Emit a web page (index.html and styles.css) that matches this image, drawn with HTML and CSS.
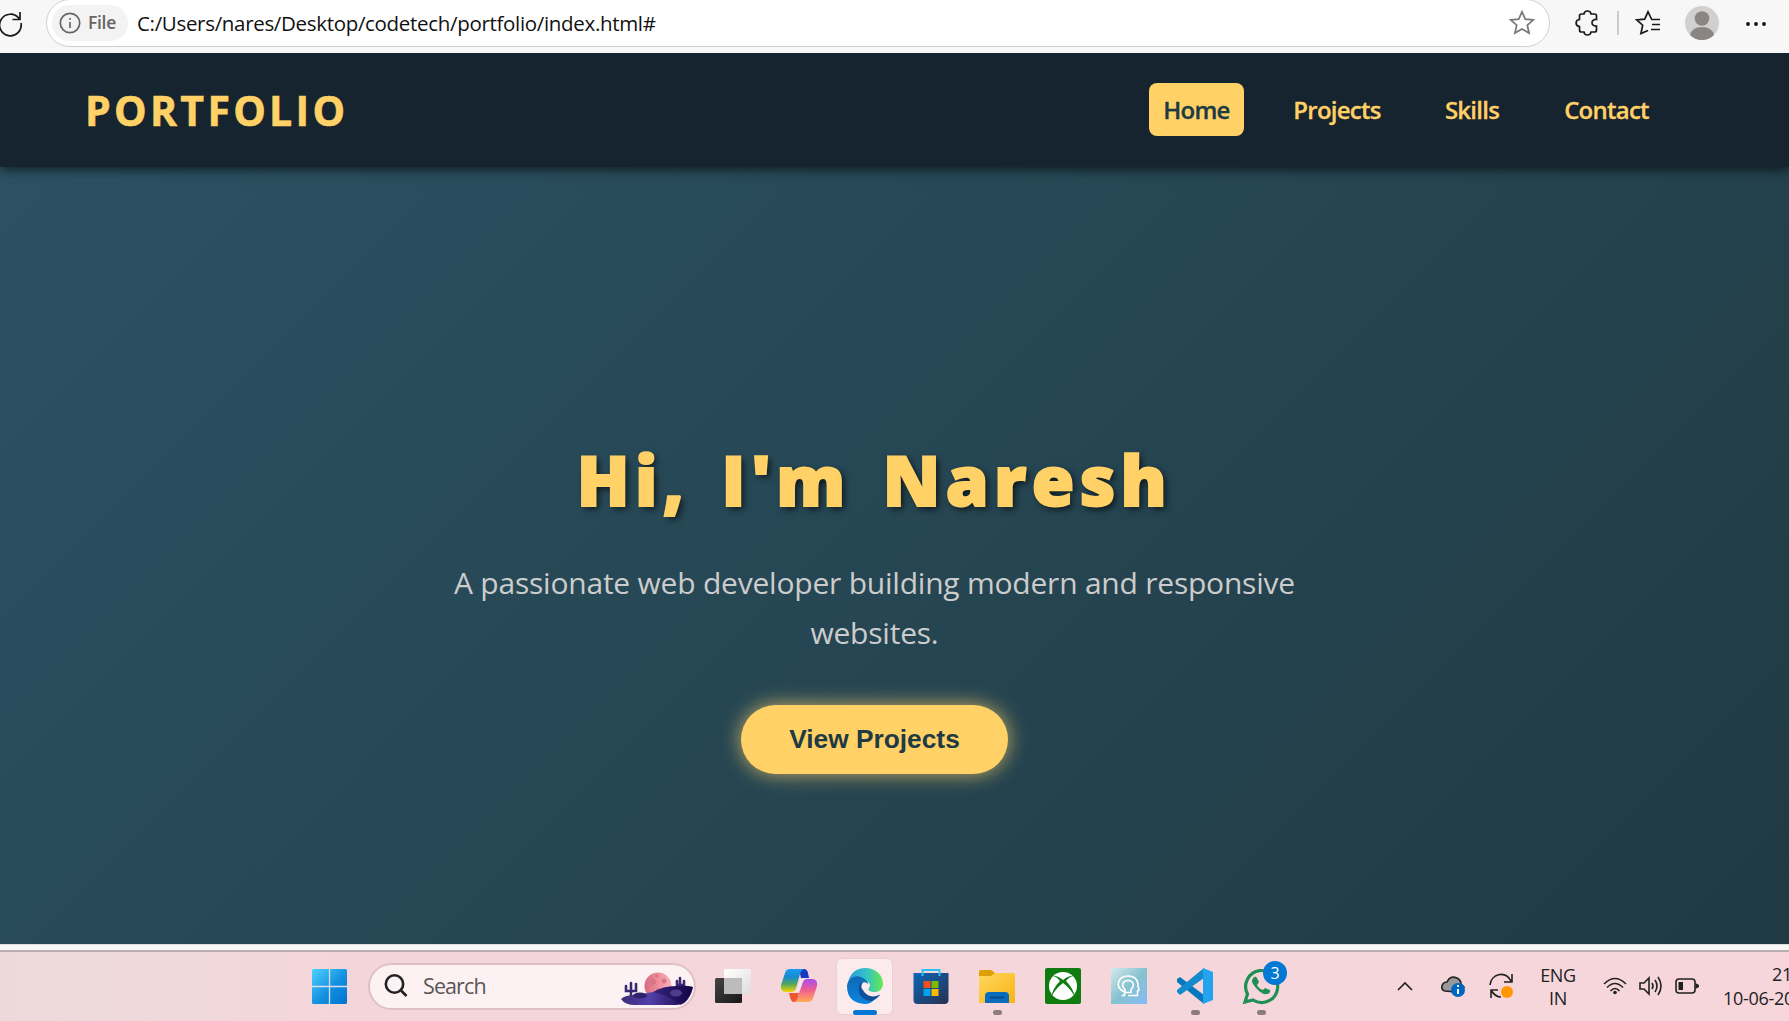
FILE: index.html
```html
<!DOCTYPE html>
<html lang="en">
<head>
<meta charset="utf-8">
<title>Portfolio</title>
<link rel="stylesheet" href="styles.css">
</head>
<body>
<div class="toolbar">
  <svg class="reload" viewBox="0 0 24 24"><path d="M21 7.500A10.800 10.800 0 1 0 23 12M22 1v7.500h-7.500"/></svg>
  <div class="address">
    <span class="file-chip"><svg class="info" viewBox="0 0 22 22"><circle cx="11" cy="11" r="9.700"/><path d="M11 10v6M11 6v1.800"/></svg><span>File</span></span>
    <span class="url">C:/Users/nares/Desktop/codetech/portfolio/index.html#</span>
    <svg class="star" viewBox="0 0 26 26"><path d="M13 1.800l3.300 7.300 8 .8-6 5.300 1.800 7.900L13 19l-7.100 4.100 1.800-7.900-6-5.300 8-.8z"/></svg>
  </div>
  <svg class="puzzle" viewBox="0 0 24 26"><path d="M6.500 4H9c.5-4 6.500-4 7 0h3.500q2 0 2 2v3.500c-6-.5-6 7 0 6.500V20q0 2-2 2H16c-.5 4-6.500 4-7 0H6.500q-2 0-2-2v-3.500c-4.500-.5-4.500-6.500 0-7V6q0-2 2-2z"/></svg>
  <i class="rule"></i>
  <svg class="favs" viewBox="0 0 26 26"><path d="M16.500 9L13 1.800 9.700 9.100l-8 .8 6 5.300-1.800 8.400L13 20.500M16 9.500h9M17 14.500h8M16 19.500h9"/></svg>
  <svg class="avatar" viewBox="0 0 34 34"><circle cx="17" cy="17" r="17" fill="#d2d0ce"/><circle cx="17" cy="12.500" r="7.300" fill="#8a8583"/><path d="M5 29q2-8 12-8t12 8Q24 34 17 34T5 29z" fill="#8a8583"/></svg>
  <svg class="more" viewBox="0 0 20 4"><circle cx="2" cy="2" r="1.900"/><circle cx="10" cy="2" r="1.900"/><circle cx="18" cy="2" r="1.900"/></svg>
</div>
<div class="page">
  <header class="site-header">
    <div class="logo">PORTFOLIO</div>
    <nav><a class="home active">Home</a><a class="projects">Projects</a><a class="skills">Skills</a><a class="contact">Contact</a></nav>
  </header>
  <main class="hero">
    <h1>Hi, I'm Naresh</h1>
    <p>A passionate web developer building modern and responsive<br>websites.</p>
    <button>View Projects</button>
  </main>
</div>
<div class="window-edge"></div>
<footer class="taskbar">
  <svg class="start" viewBox="0 0 35 35"><defs><linearGradient id="win" x2="1" y2="1"><stop stop-color="#4dd2ff"/><stop offset=".55" stop-color="#1490e0"/><stop offset="1" stop-color="#0072d0"/></linearGradient></defs><rect width="35" height="35" rx="1.500" fill="url(#win)"/><path d="M17.500 0v35M0 17.500h35" stroke="#d5dff0" stroke-width="1.300"/></svg>
  <div class="search">
    <svg class="lens" viewBox="0 0 24 24"><circle cx="10.500" cy="10" r="8.700"/><path d="M17 16.500l5.500 5.500"/></svg>
    <span>Search</span>
    <svg class="desert" viewBox="0 0 72 34"><defs><linearGradient id="dune"><stop stop-color="#3d2c78"/><stop offset=".4" stop-color="#5140a8"/><stop offset="1" stop-color="#12003f"/></linearGradient><linearGradient id="moon"><stop stop-color="#d4697f"/><stop offset=".5" stop-color="#f08d9c"/><stop offset="1" stop-color="#f6b2ba"/></linearGradient></defs><circle cx="37" cy="14" r="13.500" fill="url(#moon)"/><g fill="#d77586"><circle cx="32" cy="10" r="3"/><circle cx="43" cy="9" r="2.400"/><circle cx="37" cy="18" r="2"/><circle cx="36" cy="4" r="1.400"/></g><path d="M10 26V11M5 14v5h5M15 12v7h-5M59 17V6M56 9v4h3M63 9v4h-4" fill="none" stroke="#37286f" stroke-width="2.600" stroke-linecap="round"/><path d="M0 27q4-4 14-4 8-1 18-3 10-6 24-6 9-1 16 1-2 10-9 16-3 2-8 2H14Q4 33 0 27z" fill="url(#dune)"/><path d="M32 20q14 2 28 13 9-4 12-18-7-2-16-1-14 0-24 6z" fill="#1a0850" opacity=".45"/><ellipse cx="19" cy="23.500" rx="7" ry="3" fill="#30226b"/><ellipse cx="55" cy="21" rx="6" ry="3.500" fill="#4b3e8c"/></svg>
  </div>
  <svg class="app taskview" viewBox="0 0 36 36"><defs><linearGradient id="tv" x2="1" y2="1"><stop stop-color="#444"/><stop offset="1" stop-color="#181818"/></linearGradient><linearGradient id="tw" x2="1" y2="1"><stop stop-color="#fff"/><stop offset="1" stop-color="#ddd"/></linearGradient></defs><rect y="10" width="27" height="25" rx="1.500" fill="url(#tv)"/><rect x="9" y="1" width="27" height="25" rx="1.500" fill="url(#tw)"/><path d="M9 10h18v16H9z" fill="#bcbcbc"/></svg>
  <svg class="app copilot" viewBox="0 0 36 36"><defs><linearGradient id="cpa" x2="0" y2="1"><stop stop-color="#1c9af0"/><stop offset=".35" stop-color="#168bd0"/><stop offset=".65" stop-color="#51a660"/><stop offset="1" stop-color="#f5d400"/></linearGradient><linearGradient id="cpb" x2="0" y2="1"><stop stop-color="#a94df0"/><stop offset=".5" stop-color="#f2608c"/><stop offset="1" stop-color="#ffad54"/></linearGradient></defs><path d="M18 1h5q3 0 4 4l1 5h-8z" fill="#1838c4"/><path d="M8 25h10l-2 9h-3q-3 0-4-5z" fill="#ee5732"/><path d="M9 1h14q-3 1-4 5l-4 14q-1 4-5 4H5Q-1 24 0 17L4 5Q5 1 9 1z" fill="url(#cpa)"/><path d="M27 34H13q3-1 4-5l4-14q1-4 5-4h5q6 0 5 7l-4 12q-1 4-5 4z" fill="url(#cpb)"/><path d="M19.500 11h5q-2 1-3 4l-2 6q-1 3-5 3h-1q2-1 3-4z" fill="#f7e4e8"/></svg>
  <div class="app edge"><svg viewBox="0 0 36 36"><defs><linearGradient id="eg"><stop stop-color="#279be0"/><stop offset=".55" stop-color="#35c4c4"/><stop offset="1" stop-color="#66eb4b"/></linearGradient><linearGradient id="eb" x2="0" y2="1"><stop stop-color="#1068b4"/><stop offset="1" stop-color="#0a84de"/></linearGradient></defs><path d="M1 14Q5 0 18 0c11 0 18 7 18 16 0 5-4 8-8 8-5 0-8-2-6-4 3-4-1-7-5-7C9 8 2 10 1 14z" fill="url(#eg)"/><path d="M0 18C1 9 9 6 16 10q5 3 5 6-3-3-6-1c-5 6 1 17 11 17l2-1Q24 36 18 36 0 35 0 18z" fill="url(#eb)"/><path d="M15 14c-6 5-4 18 9 19 5-1 8-5 9-6q0-1-1 0c-6 3-13 1-16-5-3-3-1-6 0-8z" fill="#104f9a"/></svg></div>
  <svg class="app" viewBox="0 0 36 36"><defs><linearGradient id="sg" x2="1" y2="1"><stop stop-color="#0b66b7"/><stop offset="1" stop-color="#293050"/></linearGradient></defs><path d="M9.500 8V2h17v6" fill="none" stroke="#2bc1f5" stroke-width="2"/><path d="M.5 5h35v27q0 4-4 4h-27q-4 0-4-4z" fill="url(#sg)"/><path d="M9.500 8V5M26.500 8V5" stroke="#2bc1f5" stroke-width="2"/><path d="M10.500 13h7v7h-7z" fill="#f25022"/><path d="M18.500 13h7v7h-7z" fill="#7fba00"/><path d="M10.500 21h7v7h-7z" fill="#00a4ef"/><path d="M18.500 21h7v7h-7z" fill="#ffb900"/></svg>
  <div class="app running"><svg viewBox="0 0 36 36"><defs><linearGradient id="fg" x2="1" y2="1"><stop stop-color="#ffd75e"/><stop offset="1" stop-color="#f8b416"/></linearGradient></defs><path d="M0 4q0-2 2-2h10l4 3h18v8H0z" fill="#dca000"/><path d="M0 8h12l4-3h18q2 0 2 2v28H0z" fill="url(#fg)"/><path d="M6 35v-7q0-4 4-4h16q4 0 4 4v7z" fill="#0b6cbe"/><path d="M11 29.500h14" stroke="#064a8c" stroke-width="2"/></svg></div>
  <svg class="app" viewBox="0 0 36 36"><rect width="36" height="36" rx="2" fill="#107c10"/><circle cx="18" cy="18" r="14" fill="#fff"/><path d="M7 8Q11 7 18 12 25 7 29 8q-4 0-8 5 7 7 9 16-5-9-12-14-7 5-12 14 2-9 9-16-4-5-8-5z" fill="#107c10"/></svg>
  <svg class="app" viewBox="0 0 36 36"><defs><linearGradient id="hd" x2="1" y2="1"><stop stop-color="#d5eaea"/><stop offset=".5" stop-color="#86c2cf"/><stop offset="1" stop-color="#84bcf6"/></linearGradient></defs><path d="M0 0h36v36H0z" fill="url(#hd)"/><path d="M10.500 27.500h3v-3.500C3 19 7 8 17 8c7 0 10 4 10 10l1 4-1.500 1v4.500H17" fill="none" stroke="#fff" stroke-width="1.600"/><path d="M14 24.500v-3c-5-5-1-9 3-9s8 4 3 9v3z" fill="none" stroke="#fff" stroke-width="1.600"/></svg>
  <div class="app running"><svg viewBox="0 0 36 36"><path d="M0 11l3-2 24 18v9L0 14z" fill="#0878be"/><path d="M0 24l3 3L27 10V0L0 22z" fill="#1389ce"/><path d="M26 0l10 4v28l-10 4z" fill="#24a4ee"/></svg></div>
  <div class="app running whatsapp"><svg viewBox="0 0 36 36"><path d="M2 34l2.500-8A16 16 0 1 1 10 32z" fill="none" stroke="#1f8f55" stroke-width="3.200"/><path d="M11 9q2-1 3 1l2 4-2 3q2 4 6 5l2-2 5 2q1 3-3 4-4 1-9-4-7-7-6-10z" fill="#1f8f55"/></svg><b>3</b></div>
  <div class="tray">
    <svg class="chevron" viewBox="0 0 16 9"><path d="M1 8l7-7 7 7"/></svg>
    <svg class="cloud" viewBox="0 0 24 22"><path d="M4 16Q0 15 1 11t5-4Q9 0 16 3q4 2 4 6l3 3-9 5z" fill="#999"/><circle cx="17" cy="15" r="7" fill="#0067c0" stroke="none"/><path d="M17 14v5M17 10v2" class="mark"/></svg>
    <svg class="sync" viewBox="0 0 24 26"><path d="M1 12C2 1 16-3 22 8M23 1v8h-8M9 17H2v8M2 17q4 7 10 7"/><circle cx="18" cy="19" r="6" fill="#ff9700" stroke="none"/></svg>
    <div class="lang">ENG<br>IN</div>
    <svg class="wifi" viewBox="0 0 24 18"><path d="M1 7q11-11 22 0M4 10.500q8-8 16 0M7.500 14q4.500-5 9 0"/><circle cx="12" cy="15.500" r="1.800" fill="#222" stroke="none"/></svg>
    <svg class="sound" viewBox="0 0 24 20"><path d="M1 7h4l5-5v16l-5-5H1zM13 7q2 3 0 6M16 4q4 6 0 12M19 1q6 9 0 18"/></svg>
    <svg class="battery" viewBox="0 0 24 16"><rect x="1" y="1" width="19" height="14" rx="3"/><path d="M3.500 4H8v8H3.500zM20.500 5L24 7v2l-3.500 2z" fill="#222" stroke="none"/></svg>
    <div class="clock"><span class="time">21</span><span>10-06-20</span></div>
  </div>
</footer>
</body>
</html>
```

FILE: styles.css
```css
* { box-sizing: border-box; }
body { margin: 0; width: 1789px; height: 1021px; overflow: hidden; display: flex; flex-direction: column; font-family: "Open Sans", "Noto Sans", sans-serif; }
svg { display: block; flex: none; overflow: visible; }
.toolbar { height: 53px; background: #f7f7f7; display: flex; align-items: flex-start; overflow: hidden; }
.toolbar > svg, .star, .info { fill: none; stroke: #1a1a1a; stroke-width: 1.700; }
.reload { width: 24px; height: 24px; margin: 11px 0 0 -2px; }
.address { width: 1504px; height: 48px; margin: -1px 0 0 24px; border: 1.500px solid #d0d0d0; border-radius: 24px; background: #fff; display: flex; align-items: center; padding: 0 14px 0 5px; }
.file-chip { width: 76px; height: 36px; border-radius: 18px; background: #f3f3f3; display: flex; align-items: center; gap: 7px; padding-left: 7px; color: #666; font-size: 17.500px; font-weight: 600; letter-spacing: -.3px; }
.file-chip span { margin-top: -2px; }
.info { width: 22px; height: 22px; stroke: #666; }
.url { margin: -1px 0 0 9px; font-size: 20.500px; letter-spacing: -.32px; color: #111; white-space: nowrap; }
.star { width: 26px; height: 26px; margin-left: auto; stroke: #777; }
.puzzle { width: 24px; height: 26px; margin: 10px 0 0 25px; }
.rule { width: 1.500px; height: 24px; background: #ccc; margin: 11px 0 0 18px; }
.favs { width: 26px; height: 26px; margin: 10px 0 0 16px; }
.toolbar .avatar { width: 34px; height: 34px; margin: 6px 0 0 24px; stroke: none; }
.toolbar .more { width: 20px; height: 4px; margin: 22px 0 0 27px; fill: #111; stroke: none; }
.page { height: 891px; overflow: hidden; background: linear-gradient(135deg, #2c5364, #203a43); display: flex; flex-direction: column; }
.site-header { height: 114px; flex: none; background: #16242f; box-shadow: 0 3px 10px rgba(0,0,0,.6); display: flex; align-items: center; justify-content: space-between; padding: 0 125px 1px 85px; }
.logo { color: #ffd166; font-size: 41px; font-weight: 700; letter-spacing: 3.300px; padding-top: 1px; -webkit-text-stroke: .6px #ffd166; }
nav { display: flex; gap: 35px; }
nav a { height: 53px; display: flex; align-items: center; justify-content: center; border-radius: 8px; color: #ffd166; font-size: 24px; font-weight: 600; letter-spacing: -.75px; -webkit-text-stroke: .3px currentColor; }
.home { width: 95px; }
.projects { width: 116px; }
.skills { width: 84px; }
.contact { width: 115px; }
.active { background: #ffd166; color: #203a43; }
.hero { display: flex; flex-direction: column; align-items: center; padding: 264px 40px 0 0; }
h1 { margin: 0; height: 96px; line-height: 96px; color: #ffd166; font-size: 69px; font-weight: 800; letter-spacing: 5.300px; word-spacing: 9px; -webkit-text-stroke: 2px #ffd166; text-shadow: 3px 3px 7px rgba(0,0,0,.7); white-space: nowrap; }
.hero p { margin: 31px 0 0; text-align: center; font-size: 30px; line-height: 50px; letter-spacing: -.22px; color: #ccc; white-space: nowrap; }
button { width: 267px; height: 69px; margin-top: 47px; border: 0; border-radius: 35px; background: #ffd166; color: #203a43; font: bold 26.300px "Liberation Sans", Arial, sans-serif; box-shadow: 0 0 20px rgba(255,209,102,.75); }
.window-edge { height: 8px; background: #f7f7f7; border-top: 1px solid #ddd; border-bottom: 2px solid #b9aeb0; }
.taskbar { height: 69px; background: linear-gradient(90deg, #ecdadb, #f4d6da 20%, #f6d6db); display: flex; align-items: center; padding: 0 0 1px 312px; }
.start { width: 35px; height: 35px; }
.search { width: 328px; height: 47px; margin: 0 19px 0 21px; border: 2px solid #dfc0c5; border-radius: 24px; background: #fcf2f3; display: flex; align-items: center; padding: 0 1px 0 14px; color: #5a5556; font-size: 21.500px; }
.lens { width: 24px; height: 24px; fill: none; stroke: #222; stroke-width: 2.600; margin-right: 15px; }
.search span { margin-top: -2px; letter-spacing: -1.100px; letter-spacing: -.9px; }
.desert { width: 72px; height: 34px; margin: 5px 0 0 auto; }
.app { width: 36px; height: 36px; flex: none; margin-right: 30px; position: relative; }
.edge { width: 57px; height: 57px; margin: 0 20px 0 -11px; border: 1px solid #ead0d4; border-radius: 6px; background: #fbebed; padding: 9.500px; }
.edge svg, .running svg { width: 36px; height: 36px; }
.edge::after, .running::after { content: ""; position: absolute; left: 14px; top: 42px; width: 9px; height: 5px; border-radius: 3px; background: #8b7b7e; }
.edge::after { left: 16px; top: 51px; width: 24px; background: #0078d4; }
.whatsapp b { position: absolute; left: 20px; top: -7px; width: 24px; height: 24px; border-radius: 50%; background: #0078d4; color: #fff; font-size: 16px; font-weight: 400; line-height: 24px; text-align: center; }
.tray { display: flex; align-items: center; margin-left: 88px; color: #222; font-size: 18px; }
.tray svg { fill: none; stroke: #222; stroke-width: 1.600; }
.chevron { width: 16px; height: 9px; }
.cloud { width: 24px; height: 22px; margin-left: 28px; }
.cloud .mark { stroke: #fff; stroke-width: 2; }
.sync { width: 24px; height: 26px; margin-left: 24px; }
.lang { width: 50px; margin: 2px 0 0 20px; text-align: center; line-height: 23px; letter-spacing: -.3px; }
.wifi { width: 24px; height: 18px; margin-left: 20px; }
.sound { width: 24px; height: 20px; margin-left: 12px; }
.battery { width: 24px; height: 16px; margin-left: 12px; }
.clock { width: 66px; margin: -1px 0 0 24px; overflow: hidden; display: flex; flex-direction: column; line-height: 24px; white-space: nowrap; letter-spacing: -.3px; }
.time { margin-left: 49px; }
```
